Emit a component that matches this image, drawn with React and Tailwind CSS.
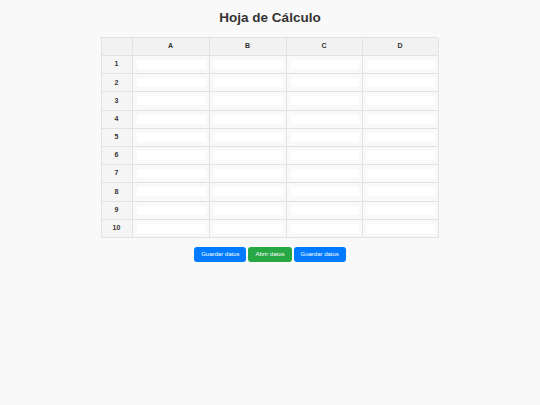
import React from "react";

const cols = ["A", "B", "C", "D"];
const rows = [1, 2, 3, 4, 5, 6, 7, 8, 9, 10];

export default function App() {
  return (
    <div
      className="min-h-[405px] w-[540px] bg-[#f9f9f9] text-[#333]"
      style={{ fontFamily: '"Liberation Sans", Arial, sans-serif' }}
    >
      <h1 className="pt-[10px] text-center text-[13.5px] font-bold leading-[16px] text-[#333]">
        Hoja de Cálculo
      </h1>
      <div className="mt-[11px] flex justify-center pr-[2px]">
        <div className="grid w-[337px] grid-cols-[31px_77px_77px_76px_76px] grid-rows-[18px_repeat(10,18.2px)] border-l border-t border-[#e2e2e2]">
          <div className="border-b border-r border-[#e2e2e2] bg-[#f2f2f2]" />
          {cols.map((c) => (
            <div
              key={c}
              className="flex items-center justify-center border-b border-r border-[#e2e2e2] bg-[#f2f2f2] text-[7px] font-bold"
            >
              {c}
            </div>
          ))}
          {rows.map((r) => (
            <React.Fragment key={r}>
              <div className="flex items-center justify-center border-b border-r border-[#e2e2e2] bg-[#f5f5f5] text-[7px] font-bold">
                {r}
              </div>
              {cols.map((c) => (
                <div
                  key={c}
                  className="flex items-center border-b border-r border-[#e2e2e2] bg-[#f9f9f9] pl-[4px] pr-[3px]"
                >
                  <div className="h-[9px] w-full bg-white" />
                </div>
              ))}
            </React.Fragment>
          ))}
        </div>
      </div>
      <div className="mt-[9px] flex justify-center gap-[2px]">
        <button className="h-[15px] rounded-[3px] bg-[#007bff] px-[7px] text-[6px] leading-[15px] text-white">
          Guardar datos
        </button>
        <button className="h-[15px] rounded-[3px] bg-[#28a745] px-[7px] text-[6px] leading-[15px] text-white">
          Abrir datos
        </button>
        <button className="h-[15px] rounded-[3px] bg-[#007bff] px-[7px] text-[6px] leading-[15px] text-white">
          Guardar datos
        </button>
      </div>
    </div>
  );
}
